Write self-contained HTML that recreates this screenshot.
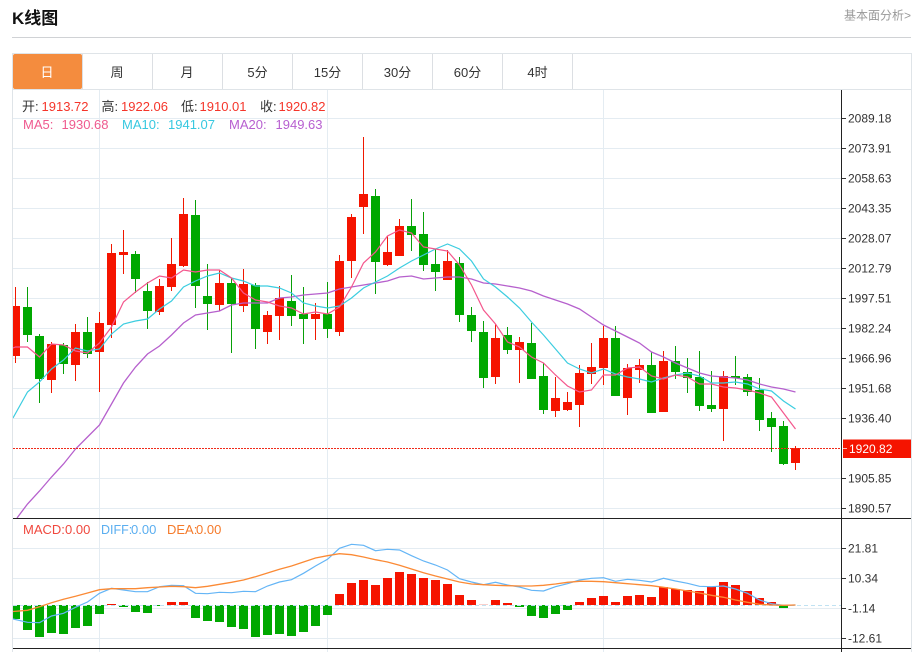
<!DOCTYPE html>
<html lang="zh">
<head>
<meta charset="utf-8">
<title>K线图</title>
<style>
html,body{margin:0;padding:0;background:#fff;width:919px;height:652px;overflow:hidden}
svg{display:block}
text{font-family:"Liberation Sans","Noto Sans CJK SC",sans-serif}
.ax text{font-size:12px;fill:#333}
.lg text{font-size:13px}
.tab text{font-size:13px;fill:#333;text-anchor:middle}
</style>
</head>
<body>
<svg width="919" height="652" viewBox="0 0 919 652" xmlns="http://www.w3.org/2000/svg">
<defs><clipPath id="p"><rect x="13" y="89" width="828" height="563"/></clipPath></defs>

<text x="12" y="24" font-size="17" font-weight="700" fill="#111">K线图</text>
<text x="844" y="19.500" font-size="12" fill="#999">基本面分析&gt;</text>
<path d="M12 37.500H911" stroke="#d0d2d5" fill="none"/>

<!-- tabs -->
<path d="M12.500 53V652M12 53.500H912M911.500 53V652M13 89.500H911" stroke="#dfe4e8" fill="none"/>
<rect x="13" y="54" width="69" height="35" rx="2" fill="#f48c3e"/>
<path d="M82.500 54V89M152.500 54V89M222.500 54V89M292.500 54V89M362.500 54V89M432.500 54V89M502.500 54V89M572.500 54V89" stroke="#dcdfe3" fill="none"/>
<g class="tab">
<text x="47" y="77" style="fill:#fff">日</text>
<text x="117" y="77">周</text>
<text x="187" y="77">月</text>
<text x="257.500" y="77">5分</text>
<text x="327.500" y="77">15分</text>
<text x="397.500" y="77">30分</text>
<text x="467.500" y="77">60分</text>
<text x="537.500" y="77">4时</text>
</g>

<!-- grid -->
<path d="M13 118.500H841M13 148.500H841M13 178.500H841M13 208.500H841M13 238.500H841M13 268.500H841M13 298.500H841M13 328.500H841M13 358.500H841M13 388.500H841M13 418.500H841M13 478.500H841M13 508.500H841M13 548.500H841M13 578.500H841M13 608.500H841M13 638.500H841M99.500 90V652M327.500 90V652M603.500 90V652" stroke="#e4ecf2" fill="none"/>

<g clip-path="url(#p)" shape-rendering="crispEdges" fill="none">
<!-- red wicks -->
<path stroke="#f01800" d="M15.500 287V363M51.500 342V393M75.500 324V381M99.500 312V392M111.500 244V338M123.500 230V274M159.500 279V315M171.500 238V291M183.500 198V267M219.500 270V311M243.500 269V312M267.500 311V344M279.500 286V340M315.500 303V340M339.500 255V336M351.500 214V278M363.500 137V234M387.500 236V266M399.500 219V256M447.500 250V280M495.500 324V384M519.500 337V383M555.500 377V417M567.500 392V411M579.500 365V427M591.500 343V384M603.500 326V385M627.500 364V415M639.500 359V383M663.500 351V412M723.500 371V441M795.500 446V470"/>
<!-- green wicks -->
<path stroke="#08a008" d="M27.500 287V342M39.500 334V403M63.500 343V374M87.500 317V358M135.500 251V293M147.500 282V329M195.500 200V308M207.500 264V330M231.500 278V353M255.500 283V349M291.500 275V326M303.500 287V344M327.500 282V338M375.500 189V294M411.500 199V251M423.500 212V271M435.500 249V291M459.500 257V322M471.500 307V342M483.500 321V388M507.500 327V354M531.500 323V379M543.500 363V414M615.500 326V396M651.500 352V413M675.500 346V379M687.500 358V393M699.500 351V411M711.500 371V412M735.500 356V385M747.500 374V396M759.500 378V431M771.500 412V452M783.500 421V465"/>
<!-- red bodies -->
<path stroke="#f51400" stroke-width="9" d="M15.500 306V356M51.500 344V380M75.500 332V365M99.500 323V352M111.500 253V325M123.500 252V255M159.500 286V312M171.500 264V287M183.500 214V266M219.500 283V305M243.500 284V306M267.500 315V332M279.500 298V316M315.500 314V319M339.500 261V332M351.500 217V261M363.500 194V207M387.500 252V265M399.500 226V256M447.500 261V280M495.500 338V377M519.500 342V350M555.500 398V411M567.500 402V410M579.500 373V405M591.500 367V374M603.500 338V368M627.500 368V398M639.500 365V370M663.500 361V412M723.500 376V409M795.500 448V463"/>
<!-- green bodies -->
<path stroke="#00a800" stroke-width="9" d="M27.500 307V335M39.500 336V379M63.500 345V364M87.500 332V354M135.500 254V279M147.500 291V311M195.500 215V286M207.500 296V304M231.500 283V304M255.500 285V329M291.500 301V316M303.500 314V319M327.500 314V329M375.500 196V262M411.500 226V235M423.500 234V265M435.500 264V272M459.500 263V315M471.500 315V331M483.500 332V378M507.500 335V350M531.500 343V379M543.500 376V410M615.500 338V396M651.500 365V413M675.500 361V372M687.500 372V378M699.500 377V406M711.500 405V409M735.500 376V378M747.500 377V392M759.500 390V420M771.500 418V427M783.500 426V464"/>
<!-- macd bars red -->
<path stroke="#f51400" stroke-width="9" d="M111.500 604V605M171.500 602V605M183.500 602V605M339.500 594V605M351.500 583V605M363.500 580V605M375.500 585V605M387.500 578V605M399.500 572V605M411.500 574V605M423.500 578V605M435.500 580V605M447.500 584V605M459.500 595V605M471.500 600V605M495.500 600V605M507.500 603V605M579.500 602V605M591.500 598V605M603.500 596V605M615.500 602V605M627.500 596V605M639.500 595V605M651.500 597V605M663.500 587V605M675.500 589V605M687.500 590V605M699.500 591V605M711.500 587V605M723.500 582V605M735.500 585V605M747.500 591V605M759.500 598V605M771.500 602V605"/>
<path stroke="#f9d0cc" stroke-width="9" d="M483.500 604V605"/>
<!-- macd bars green -->
<path stroke="#00a800" stroke-width="9" d="M15.500 605V619M27.500 605V630M39.500 605V637M51.500 605V633M63.500 605V634M75.500 605V628M87.500 605V626M99.500 605V614M123.500 605V607M135.500 605V612M147.500 605V613M159.500 605V606M195.500 605V618M207.500 605V621M219.500 605V622M231.500 605V627M243.500 605V629M255.500 605V637M267.500 605V635M279.500 605V634M291.500 605V636M303.500 605V632M315.500 605V626M327.500 605V615M519.500 605V607M531.500 605V616M543.500 605V618M555.500 605V614M567.500 605V610M783.500 605V608"/>
</g>

<g clip-path="url(#p)" fill="none">
<path d="M13 605.500H841" stroke="#c0e2f2" stroke-dasharray="4 3"/>
<!-- MA20 -->
<path stroke="#b660cd" stroke-width="1.300" d="M17 518L27.500 504 39.500 491 51.500 477 63.500 464 75.500 449 87.500 437 99.500 425 111.500 404 123.500 383 135.500 367 147.500 354 159.500 346 171.500 335 183.500 323 195.500 315 207.500 313 219.500 311 231.500 305 243.500 303 255.500 303 267.500 303 279.500 298 291.500 297 303.500 295 315.500 294 327.500 293 339.500 289 351.500 287 363.500 285 375.500 283 387.500 281 399.500 277 411.500 276 423.500 279 435.500 278 447.500 277 459.500 277 471.500 279 483.500 283 495.500 284 507.500 286 519.500 288 531.500 291 543.500 296 555.500 300 567.500 304 579.500 309 591.500 317 603.500 325 615.500 331 627.500 337 639.500 343 651.500 352 663.500 357 675.500 363 687.500 368 699.500 373 711.500 376 723.500 377 735.500 378 747.500 380 759.500 384 771.500 387 783.500 389 795.500 392"/>
<!-- MA10 -->
<path stroke="#3ccde0" stroke-width="1.200" d="M13 418L27.500 392 39.500 382 51.500 369 63.500 360 75.500 348 87.500 351 99.500 349 111.500 334 123.500 324 135.500 321 147.500 319 159.500 309 171.500 301 183.500 287 195.500 281 207.500 276 219.500 273 231.500 278 243.500 281 255.500 286 267.500 286 279.500 288 291.500 293 303.500 303 315.500 306 327.500 308 339.500 306 351.500 298 363.500 288 375.500 282 387.500 276 399.500 268 411.500 261 423.500 255 435.500 249 447.500 244 459.500 249 471.500 261 483.500 279 495.500 287 507.500 297 519.500 308 531.500 322 543.500 335 555.500 349 567.500 363 579.500 369 591.500 373 603.500 369 615.500 374 627.500 377 639.500 379 651.500 382 663.500 378 675.500 375 687.500 373 699.500 376 711.500 383 723.500 383 735.500 382 747.500 384 759.500 389 771.500 391 783.500 401 795.500 409"/>
<!-- MA5 -->
<path stroke="#f4578d" stroke-width="1.200" d="M13 348L15.500 347 27.500 347 39.500 357 51.500 344 63.500 345 75.500 351 87.500 353 99.500 343 111.500 327 123.500 302 135.500 292 147.500 283 159.500 276 171.500 278 183.500 270 195.500 272 207.500 270 219.500 270 231.500 278 243.500 293 255.500 300 267.500 302 279.500 306 291.500 308 303.500 314 315.500 312 327.500 314 339.500 307 351.500 287 363.500 263 375.500 252 387.500 236 399.500 230 411.500 233 423.500 247 435.500 249 447.500 251 459.500 265 471.500 285 483.500 310 495.500 324 507.500 342 519.500 347 531.500 357 543.500 363 555.500 375 567.500 386 579.500 392 591.500 390 603.500 375 615.500 375 627.500 368 639.500 367 651.500 376 663.500 379 675.500 375 687.500 377 699.500 384 711.500 384 723.500 387 735.500 388 747.500 390 759.500 393 771.500 397 783.500 413 795.500 429"/>
<!-- DIFF -->
<path stroke="#64b5f6" stroke-width="1.200" d="M13 619L27.500 622.300 39.500 622.700 51.500 616 63.500 613.300 75.500 607.300 87.500 602 99.500 593.300 111.500 588.300 123.500 590 135.500 591.700 147.500 591.700 159.500 586.700 171.500 585.300 183.500 585.700 195.500 593.300 207.500 593.700 219.500 592.300 231.500 592.700 243.500 591.300 255.500 591.700 267.500 586 279.500 582 291.500 579.700 303.500 573.300 315.500 566 327.500 559.300 339.500 548.300 351.500 544.300 363.500 545.300 375.500 550.700 387.500 549.300 399.500 550 411.500 555.700 423.500 561 435.500 565 447.500 570 459.500 578.700 471.500 582 483.500 584.700 495.500 582.300 507.500 585 519.500 587 531.500 590.300 543.500 591 555.500 586.700 567.500 583.700 579.500 580 591.500 578.300 603.500 577.700 615.500 581.300 627.500 579.300 639.500 580.300 651.500 582 663.500 578.300 675.500 581 687.500 583.300 699.500 586.300 711.500 586.700 723.500 586 735.500 589 747.500 593.300 759.500 600 771.500 603.700 783.500 605.300 795.500 605"/>
<!-- DEA -->
<path stroke="#fb8a35" stroke-width="1.300" d="M13 611.500L27.500 610.300 39.500 606.700 51.500 602.700 63.500 599.300 75.500 596.300 87.500 593 99.500 589.700 111.500 588.700 123.500 588.700 135.500 588.700 147.500 587.700 159.500 587 171.500 586.300 183.500 586.700 195.500 587.700 207.500 586.300 219.500 584.300 231.500 582.300 243.500 580 255.500 576.700 267.500 573 279.500 569.300 291.500 566 303.500 562 315.500 558 327.500 555.700 339.500 553.700 351.500 554.700 363.500 557 375.500 559.700 387.500 562 399.500 565.300 411.500 569 423.500 572.700 435.500 576 447.500 579 459.500 582 471.500 584 483.500 584.700 495.500 585.300 507.500 585.700 519.500 586 531.500 586 543.500 585.300 555.500 584 567.500 582.300 579.500 581.300 591.500 581.300 603.500 581.700 615.500 582.700 627.500 583.700 639.500 584.700 651.500 585.700 663.500 587.300 675.500 589 687.500 591 699.500 593 711.500 595.300 723.500 597.300 735.500 600 747.500 602.300 759.500 604.300 771.500 605 783.500 605.300 795.500 605"/>
<path d="M13 448.500H841" stroke="#f02a1a" stroke-dasharray="2 1"/>
</g>

<!-- axes and frame -->
<path d="M841.500 90V652M13 518.500H911M13 648.500H911" stroke="#222" fill="none"/>
<path d="M842 118.500h4M842 148.500h4M842 178.500h4M842 208.500h4M842 238.500h4M842 268.500h4M842 298.500h4M842 328.500h4M842 358.500h4M842 388.500h4M842 418.500h4M842 478.500h4M842 508.500h4M842 548.500h4M842 578.500h4M842 608.500h4M842 638.500h4" stroke="#333" fill="none"/>

<rect x="843" y="439.500" width="68" height="18.500" fill="#f51400"/>
<path d="M843 448.500h4" stroke="#fbb" fill="none"/>

<g class="ax">
<text x="848" y="122.500">2089.18</text>
<text x="848" y="152.500">2073.91</text>
<text x="848" y="182.500">2058.63</text>
<text x="848" y="212.500">2043.35</text>
<text x="848" y="242.500">2028.07</text>
<text x="848" y="272.500">2012.79</text>
<text x="848" y="302.500">1997.51</text>
<text x="848" y="332.500">1982.24</text>
<text x="848" y="362.500">1966.96</text>
<text x="848" y="392.500">1951.68</text>
<text x="848" y="422.500">1936.40</text>
<text x="849" y="453" style="fill:#fff">1920.82</text>
<text x="848" y="482.500">1905.85</text>
<text x="848" y="512.500">1890.57</text>
<text x="848" y="552.500">21.81</text>
<text x="848" y="582.500">10.34</text>
<text x="848" y="612.500">-1.14</text>
<text x="848" y="642.500">-12.61</text>
</g>

<g class="lg">
<text x="22" y="111" fill="#333">开:</text>
<text x="41.500" y="111" fill="#f5352a">1913.72</text>
<text x="101.500" y="111" fill="#333">高:</text>
<text x="121" y="111" fill="#f5352a">1922.06</text>
<text x="181" y="111" fill="#333">低:</text>
<text x="199.500" y="111" fill="#f5352a">1910.01</text>
<text x="260" y="111" fill="#333">收:</text>
<text x="278.500" y="111" fill="#f5352a">1920.82</text>

<text x="23" y="129" fill="#ef5a8f">MA5:</text>
<text x="61.500" y="129" fill="#ef5a8f">1930.68</text>
<text x="122" y="129" fill="#37c8e0">MA10:</text>
<text x="168" y="129" fill="#37c8e0">1941.07</text>
<text x="229" y="129" fill="#b75fd0">MA20:</text>
<text x="275.500" y="129" fill="#b75fd0">1949.63</text>

<text x="23" y="534" fill="#f0483e">MACD:</text>
<text x="65" y="534" fill="#f0483e">0.00</text>
<text x="101" y="534" font-size="12.500" style="font-size:12.500px" fill="#5aaef0">DIFF:</text>
<text x="131" y="534" fill="#5aaef0">0.00</text>
<text x="167" y="534" fill="#f57a2a">DEA:</text>
<text x="196" y="534" fill="#f57a2a">0.00</text>
</g>
</svg>
</body>
</html>
